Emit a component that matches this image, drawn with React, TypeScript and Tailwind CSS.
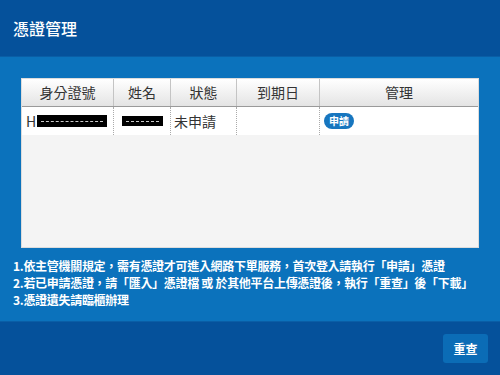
import React from "react";

const cols = [
  { label: "身分證號", w: "w-[92px]" },
  { label: "姓名", w: "w-[57px]" },
  { label: "狀態", w: "w-[66px]" },
  { label: "到期日", w: "w-[83px]" },
  { label: "管理", w: "flex-1" },
];

function Redact({ w, h }: { w: string; h: string }) {
  return (
    <span className={`inline-flex items-center bg-black ${w} ${h}`}>
      <span className="mx-[4px] w-full border-t border-dashed border-white/80" />
    </span>
  );
}

export default function App() {
  return (
    <div
      className="w-[500px] h-[375px] flex flex-col bg-[#0b72bc]"
      style={{ fontFamily: '"Noto Sans CJK TC", "Noto Sans", sans-serif' }}
    >
      {/* header */}
      <div className="h-[57px] flex items-center px-[13px] bg-[#05519b] border-b border-[#0a5ea6]">
        <span className="text-white text-[16px] font-medium">憑證管理</span>
      </div>

      {/* body */}
      <div className="flex-1 flex flex-col pt-[21px] px-[21px]">
        <div className="h-[170px] bg-[#f4f4f4] border border-[#dcdcdc] flex flex-col">
          <div className="flex h-[28px] bg-gradient-to-b from-white to-[#e4e4e4] border-b border-[#9a9a9a]">
            {cols.map((c, i) => (
              <div
                key={c.label}
                className={`${c.w} flex items-center justify-center text-[14px] text-[#333] ${
                  i < cols.length - 1 ? "border-r border-[#c4c4c4]" : ""
                }`}
              >
                {c.label}
              </div>
            ))}
          </div>
          <div className="flex h-[28px] bg-white">
            <div className="w-[92px] flex items-center pl-[4px] gap-[1px] text-[14px] text-[#333] border-r border-dotted border-[#aaa]">
              H<Redact w="w-[70px]" h="h-[12px]" />
            </div>
            <div className="w-[57px] flex items-center justify-center border-r border-dotted border-[#aaa]">
              <Redact w="w-[41px]" h="h-[10px]" />
            </div>
            <div className="w-[66px] flex items-center pl-[3px] text-[14px] text-[#333] border-r border-dotted border-[#aaa]">
              未申請
            </div>
            <div className="w-[83px] border-r border-dotted border-[#aaa]" />
            <div className="flex-1 flex items-center pl-[4px]">
              <span className="rounded-full bg-[#1776bf] text-white text-[10px] font-bold leading-none px-[5px] py-[3px]">
                申請
              </span>
            </div>
          </div>
        </div>

        <div className="mt-[9px] -ml-[8px] text-white text-[12px] font-bold leading-[17px] tracking-[-0.3px]">
          <p>1.依主管機關規定，需有憑證才可進入網路下單服務，首次登入請執行「申請」憑證</p>
          <p>2.若已申請憑證，請「匯入」憑證檔 或 於其他平台上傳憑證後，執行「重查」後「下載」</p>
          <p>3.憑證遺失請臨櫃辦理</p>
        </div>
      </div>

      {/* footer */}
      <div className="h-[54px] flex items-center justify-end pr-[12px] bg-[#05519b] border-t border-[#0a5ea6]">
        <button className="w-[45px] h-[29px] rounded-[3px] bg-[#0b6cb6] text-white text-[12px] font-bold">
          重查
        </button>
      </div>
    </div>
  );
}
